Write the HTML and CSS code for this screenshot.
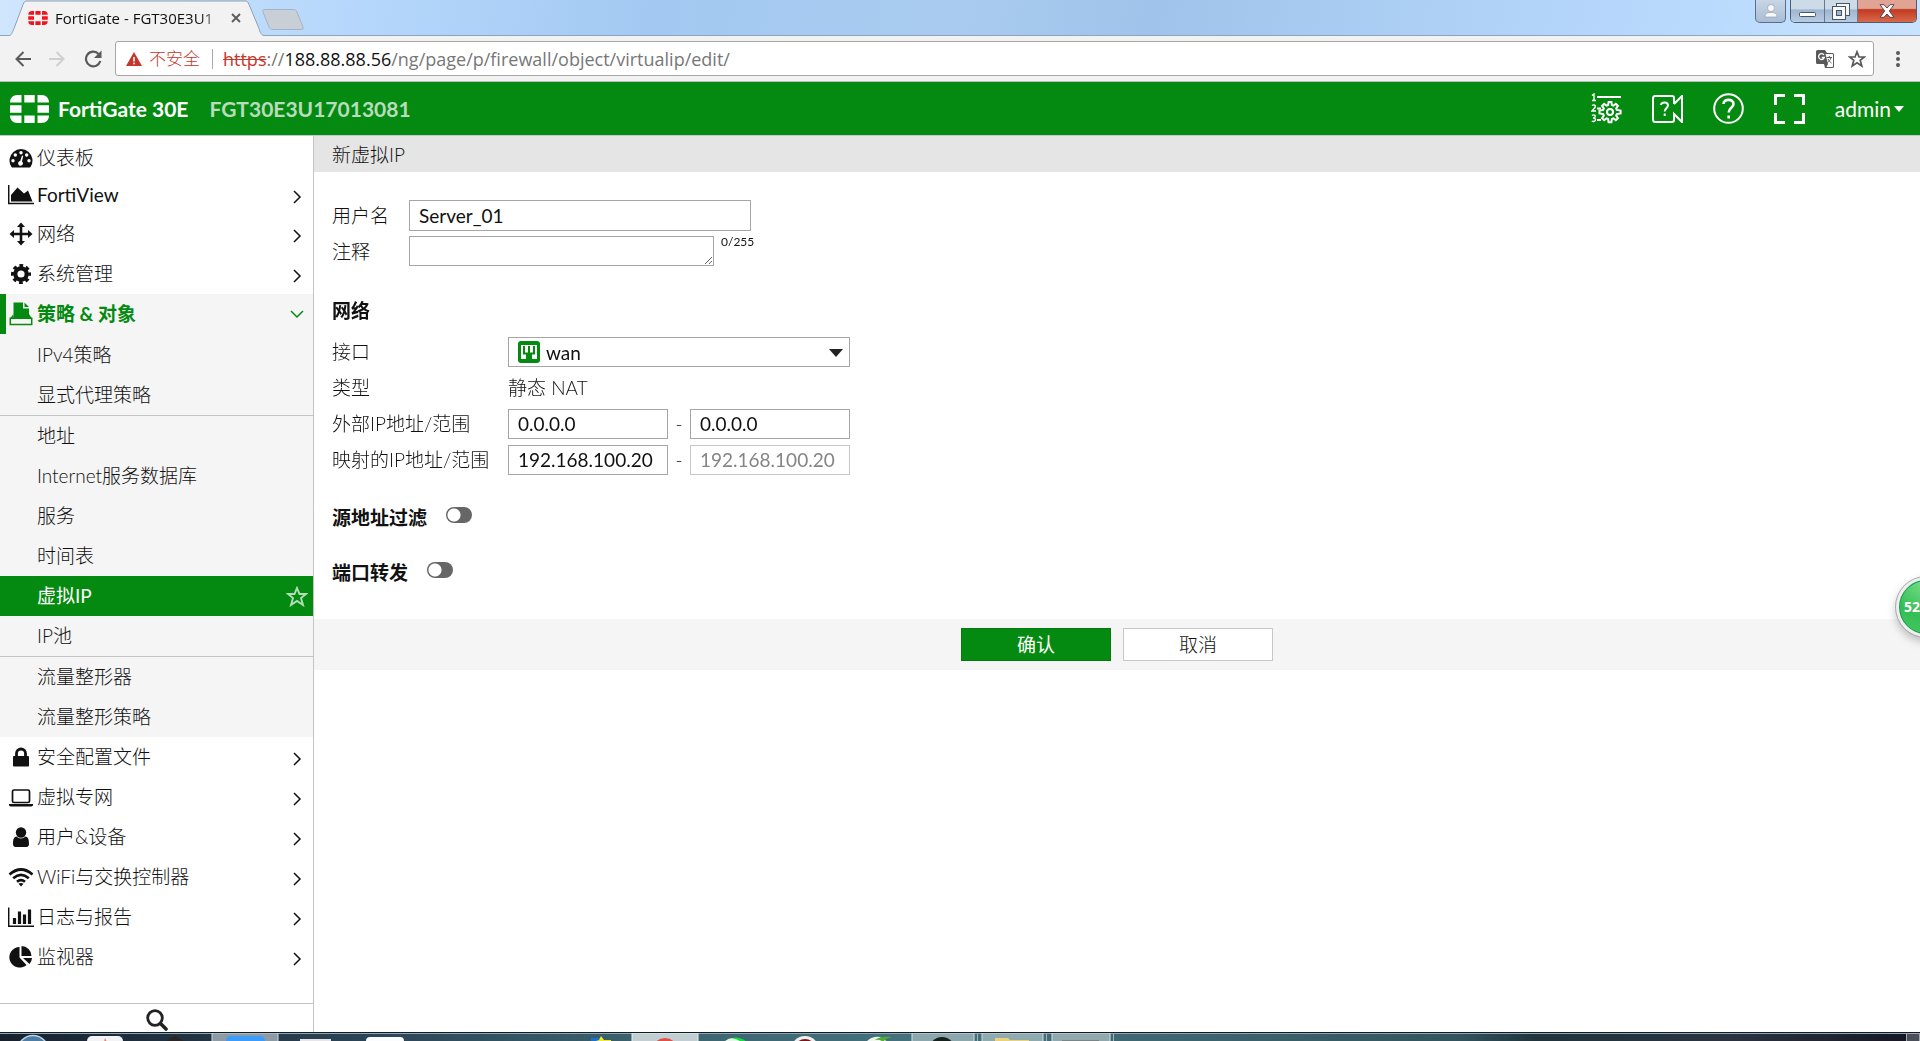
FILE: index.html
```html
<!DOCTYPE html>
<html lang="zh-CN">
<head>
<meta charset="utf-8">
<title>FortiGate - FGT30E3U17013081</title>
<link rel="stylesheet" href="styles.css">
</head>
<body>
<svg class="defs" aria-hidden="true">
  <symbol id="chevron" viewBox="0 0 12 14"><path d="M3 1 9 7 3 13" fill="none" stroke="currentColor" stroke-width="1.500"/></symbol>
  <symbol id="fortinet" viewBox="0 0 39 28">
    <path d="M0 7.500C0 3 3 0 7.500 0H11.500V7.500ZM14.300 0H24.700V7.500H14.300ZM27.500 0H31.500C36 0 39 3 39 7.500H27.500ZM0 10.300H11.500V17.700H0ZM27.500 10.300H39V17.700H27.500ZM0 20.500H11.500V28H7.500C3 28 0 25 0 20.500ZM14.300 20.500H24.700V28H14.300ZM27.500 20.500H39C39 25 36 28 31.500 28H27.500Z" fill="currentColor"/>
  </symbol>
</svg>

<header class="browser">
  <div class="tabstrip">
    <div class="tab">
      <svg class="tab-shape" width="258" height="35" viewBox="0 0 258 35"><path d="M0 35.500C4 35 4 32 6 28L15 4C16 1.500 17 .5 19 .5H237C239 .5 240 1.500 241 4L251 28C252 32 253 35 258 35.500" fill="#f2f2f2" stroke="#8f9fb8"/></svg>
      <svg class="favicon" width="20" height="14"><use href="#fortinet"/></svg>
      <span class="tab-title">FortiGate - FGT30E3U1</span>
      <button class="tab-close" aria-label="关闭标签页"><svg width="10" height="10" viewBox="0 0 10 10"><path d="M1 1 9 9M9 1 1 9" stroke="#5a5a5a" stroke-width="1.800"/></svg></button>
    </div>
    <button class="newtab" aria-label="新标签页"><svg width="42" height="21" viewBox="0 0 42 21"><path d="M2 .5H31C33 .5 34 1 35 3L41 18C41.500 20 41 20.500 39 20.500H11C9 20.500 8 20 7 18L1 3C.5 1.500 .5 .5 2 .5Z" fill="#c8cfd7" stroke="#a3b4ca"/></svg></button>
    <div class="winbtns">
      <button class="profile" aria-label="用户"><svg width="14" height="14" viewBox="0 0 14 14"><circle cx="7" cy="4" r="3.500" fill="#f8f8f8" stroke="#8c98a8" stroke-width=".6"/><path d="M1 13C1 9 4 8.500 7 8.500S13 9 13 13Z" fill="#f8f8f8" stroke="#8c98a8" stroke-width=".6"/></svg></button>
      <div class="wingroup">
        <button class="min" aria-label="最小化"><svg width="17" height="6" viewBox="0 0 17 6"><rect x=".5" y=".5" width="16" height="4" rx="1" fill="#fff" stroke="#4a5563"/></svg></button>
        <button class="max" aria-label="还原"><svg width="18" height="17" viewBox="0 0 18 17"><rect x="4.500" y=".5" width="13" height="12" fill="#f4f4f4" stroke="#4a5563"/><rect x=".5" y="3.500" width="13" height="13" fill="#f8f8f8" stroke="#4a5563"/><rect x="4.500" y="7.500" width="5" height="5" fill="#9db4cf" stroke="#4a5563"/></svg></button>
        <button class="close" aria-label="关闭"><svg width="16" height="14" viewBox="0 0 16 14"><path d="M1 .7H5L8 4 11 .7H15L10.300 7 15 13.300H11L8 10 5 13.300H1L5.700 7Z" fill="#fff" stroke="#5a4450"/></svg></button>
      </div>
    </div>
  </div>
  <div class="toolbar">
    <button aria-label="后退"><svg width="16" height="16" viewBox="0 0 16 16"><path d="M16 8H2M8.500 1 1.500 8 8.500 15" fill="none" stroke="#5a5a5a" stroke-width="2"/></svg></button>
    <button aria-label="前进"><svg width="16" height="16" viewBox="0 0 16 16"><path d="M0 8H14M7.500 1 14.500 8 7.500 15" fill="none" stroke="#d0d0d0" stroke-width="2"/></svg></button>
    <button aria-label="刷新"><svg width="18" height="18" viewBox="0 0 18 18"><path d="M14.800 4.200A7.300 7.300 0 1 0 16.300 11" fill="none" stroke="#5a5a5a" stroke-width="2.200"/><path d="M17.500 .5V8H10Z" fill="#5a5a5a"/></svg></button>
    <div class="omnibox">
      <svg width="16" height="14" viewBox="0 0 16 14"><path d="M8 0 16 14H0Z" fill="#c5372c"/><path d="M8 5V9.500M8 10.700V12.300" stroke="#fff" stroke-width="1.600"/></svg>
      <span class="insecure">不安全</span>
      <span class="url" role="textbox" aria-label="地址"><s>https</s>://<b>188.88.88.56</b>/ng/page/p/firewall/object/virtualip/edit/</span>
      <button aria-label="翻译"><svg width="18" height="18" viewBox="0 0 18 18"><path d="M1.500 0H9L11 3H16.500A1.500 1.500 0 0 1 18 4.500V16.500A1.500 1.500 0 0 1 16.500 18H9L8 14H1.500A1.500 1.500 0 0 1 0 12.500V1.500A1.500 1.500 0 0 1 1.500 0Z" fill="#5a5a5a"/><path d="M9.500 4H16.300Q17 4 17 4.700V16.300Q17 17 16.300 17H10.500L12 14Z" fill="#fff"/><path d="M8 5A2.900 2.900 0 1 0 8.300 7.500H5.800" fill="none" stroke="#fff" stroke-width="1.300"/><path d="M10.500 7.500H16M13.300 6V7.500M15 7.500C14.500 10 13 11.500 11.500 12.500M12 9C13 11 14 12 15.500 13" fill="none" stroke="#5a5a5a"/></svg></button>
      <button aria-label="收藏"><svg width="18" height="18" viewBox="0 0 18 18"><path d="M9 1.800 11 7H16.300L12.200 10.300 13.800 16 9 12.700 4.200 16 5.800 10.300 1.700 7H7Z" fill="none" stroke="#5a5a5a" stroke-width="1.700"/></svg></button>
    </div>
    <button class="menu" aria-label="菜单"><svg width="4" height="16" viewBox="0 0 4 16"><path d="M2 2V2.010M2 8V8.010M2 14V14.010" stroke="#5a5a5a" stroke-width="4" stroke-linecap="round"/></svg></button>
  </div>
</header>

<div class="appbar">
  <svg class="logo" width="39" height="28"><use href="#fortinet"/></svg>
  <span class="model">FortiGate 30E</span>
  <span class="serial">FGT30E3U17013081</span>
  <div class="tools">
    <button aria-label="设置"><svg width="31" height="31" viewBox="0 0 31 31" fill="none" stroke="#fff"><path d="M6 4H30M6 15.500H10M6 27H10" stroke-width="2"/><path d="M1 2.500 3 1V8M1 7.500H5M1 12.500C3 11 5 12.500 4 14.500L1 18H5M1 22.500C3 21 5 22.500 4 24 3.500 25 2 25 2 25 3.500 25 5 25.500 4.300 27.300 3.500 29 1.500 28.500 .8 28" stroke-width="1.400"/><path d="M17.100 12.100 17.600 9.100H20.400L20.900 12.100 22.300 12.700 24.800 10.900 26.900 12.900 25.200 15.400 25.800 16.900 29.600 17.500V20.500L25.800 21.100 25.200 22.600 26.900 25.100 24.800 27.100 22.300 25.300 20.900 25.900 20.400 29.300H17.600L17.100 25.900 15.700 25.300 13.200 27.100 11.100 25.100 12.800 22.600 12.200 21.100 8.500 20.500V17.500L12.200 16.900 12.800 15.400 11.100 12.900 13.200 10.900 15.700 12.700Z" stroke-width="2"/><circle cx="19" cy="19" r="3" stroke-width="2"/></svg></button>
    <button aria-label="视频帮助"><svg width="31" height="28" viewBox="0 0 31 28" fill="none" stroke="#fff" stroke-width="2"><path d="M22 9V3Q22 1 20 1H3Q1 1 1 4V24Q1 27 3 27H20Q22 27 22 25V19L30 27V1L22 9"/><path d="M9 10C9 6.500 16 6.500 16 10.500 16 13 12.700 13 12.700 16.500M12.700 18.500V21"/></svg></button>
    <button aria-label="帮助"><svg width="31" height="31" viewBox="0 0 31 31" fill="none" stroke="#fff"><circle cx="15.500" cy="15.500" r="14.300" stroke-width="2"/><path d="M10.500 11C10.500 5.500 20.500 5.500 20.500 11 20.500 15 15.700 14.500 15.700 19.500M15.700 22.500V25.500" stroke-width="2.600"/></svg></button>
    <button aria-label="全屏"><svg width="31" height="30" viewBox="0 0 31 30" fill="none" stroke="#fff" stroke-width="3"><path d="M1.500 11V1.500H11M20 1.500H29.500V11M29.500 19V28.500H20M11 28.500H1.500V19"/></svg></button>
    <button class="admin">admin<svg width="10" height="6" viewBox="0 0 10 6"><path d="M0 0H10L5 6Z" fill="#fff"/></svg></button>
  </div>
</div>

<div class="body">
  <nav class="sidebar">
    <a class="item first" href="#"><svg width="26" height="24" viewBox="0 0 26 24"><path fill-rule="evenodd" d="M3.500 21A11.500 11.500 0 1 1 22.500 21Q22 21.500 21.500 21.500H4.500Q4 21.500 3.500 21ZM13 5A1.700 1.700 0 1 0 13 8.400 1.700 1.700 0 1 0 13 5ZM7.300 7.300A1.700 1.700 0 1 0 7.300 10.700 1.700 1.700 0 1 0 7.300 7.300ZM18.700 7.300A1.700 1.700 0 1 0 18.700 10.700 1.700 1.700 0 1 0 18.700 7.300ZM5 13A1.700 1.700 0 1 0 5 16.400 1.700 1.700 0 1 0 5 13ZM21 13A1.700 1.700 0 1 0 21 16.400 1.700 1.700 0 1 0 21 13ZM14 9.500 12.200 15A2.400 2.400 0 1 0 14 15.500L15.200 10Z" fill="currentColor"/></svg><span>仪表板</span></a>
    <a class="item latin" href="#"><svg width="26" height="24" viewBox="0 0 26 24"><path d="M.7 2V20.500H26" fill="none" stroke="currentColor" stroke-width="1.500"/><path d="M3 18.500V12L9.500 4.500 16 10.500 20 7.500 24.500 18.500Z" fill="currentColor"/></svg><span>FortiView</span><svg class="arrow"><use href="#chevron"/></svg></a>
    <a class="item" href="#"><svg width="26" height="24" viewBox="0 0 26 24"><path d="M13 .5 17 5H14.300V10.700H20V8L24.500 12 20 16V13.300H14.300V19H17L13 23.500 9 19H11.700V13.300H6V16L1.500 12 6 8V10.700H11.700V5H9Z" fill="currentColor"/></svg><span>网络</span><svg class="arrow"><use href="#chevron"/></svg></a>
    <a class="item" href="#"><svg width="26" height="24" viewBox="0 0 26 24"><circle cx="13" cy="12" r="5.700" fill="none" stroke="currentColor" stroke-width="4.200"/><circle cx="13" cy="12" r="8.500" fill="none" stroke="currentColor" stroke-width="3" stroke-dasharray="3.700 2.976" stroke-dashoffset="1.850"/></svg><span>系统管理</span><svg class="arrow"><use href="#chevron"/></svg></a>
    <a class="item open" href="#"><svg width="26" height="24" viewBox="0 0 26 24"><path d="M5.500 .5H15V6.500H21V16H5.500ZM16.500 .5 21 5H16.500Z" fill="currentColor"/><path d="M2.300 16.300H23.700V22.500H2.300Z" fill="#f5f5f5" stroke="currentColor" stroke-width="1.500"/><path d="M5.500 12 2 16.500H5.500ZM21 12 24 16.500H21Z" fill="currentColor"/></svg><span>策略 &amp; 对象</span><svg class="arrow down"><use href="#chevron"/></svg></a>
    <div class="submenu">
      <div class="group"><a href="#">IPv4策略</a><a href="#">显式代理策略</a></div>
      <div class="group"><a href="#">地址</a><a href="#">Internet服务数据库</a><a href="#">服务</a><a href="#">时间表</a><a class="current" href="#"><span>虚拟IP</span><svg width="22" height="21" viewBox="0 0 22 21"><path d="M11 2 13.500 8H20L15 12 17 19 11 15 5 19 7 12 2 8H8.500Z" fill="none" stroke="#b5dcb9" stroke-width="1.900"/></svg></a><a href="#">IP池</a></div>
      <div class="group"><a href="#">流量整形器</a><a href="#">流量整形策略</a></div>
    </div>
    <a class="item" href="#"><svg width="26" height="24" viewBox="0 0 26 24"><path d="M8.500 12V8.500A4.500 4.500 0 0 1 17.500 8.500V12" fill="none" stroke="currentColor" stroke-width="2.800"/><rect x="5" y="11" width="16" height="10.500" rx="1" fill="currentColor"/></svg><span>安全配置文件</span><svg class="arrow"><use href="#chevron"/></svg></a>
    <a class="item" href="#"><svg width="26" height="24" viewBox="0 0 26 24"><rect x="4.500" y="5" width="17" height="12.500" rx="1.500" fill="none" stroke="currentColor" stroke-width="1.700"/><path d="M1 19H25V20.500Q24 21.500 23 21.500H3Q2 21.500 1 20.500Z" fill="currentColor"/></svg><span>虚拟专网</span><svg class="arrow"><use href="#chevron"/></svg></a>
    <a class="item" href="#"><svg width="26" height="24" viewBox="0 0 26 24"><circle cx="13" cy="7.500" r="5.200" fill="currentColor"/><path d="M5 19C5 14 6 12 8.500 11.500 11 14 15 14 17.500 11.500 20 12 21 14 21 19 21 21 20 22 18.500 22H7.500C6 22 5 21 5 19Z" fill="currentColor"/></svg><span>用户&amp;设备</span><svg class="arrow"><use href="#chevron"/></svg></a>
    <a class="item" href="#"><svg width="26" height="24" viewBox="0 0 26 24"><path d="M1.500 9.500Q13 -.5 24.500 9.500M5.200 13.200Q13 6.500 20.800 13.200M9 16.800Q13 13.300 17 16.800" fill="none" stroke="currentColor" stroke-width="2.700"/><path d="M10.500 18.800Q13 17 15.500 18.800L13 21.500Z" fill="currentColor"/></svg><span>WiFi与交换控制器</span><svg class="arrow"><use href="#chevron"/></svg></a>
    <a class="item" href="#"><svg width="26" height="24" viewBox="0 0 26 24"><path d="M.7 2.500V21.300H26" fill="none" stroke="currentColor" stroke-width="1.500"/><path d="M6.500 19V13M11.500 19V6.500M16.500 19V9.500M21.500 19V4.500" stroke="currentColor" stroke-width="3.200"/></svg><span>日志与报告</span><svg class="arrow"><use href="#chevron"/></svg></a>
    <a class="item" href="#"><svg width="26" height="24" viewBox="0 0 26 24"><path d="M11.500 2V12.500L18.500 20A10.300 10.300 0 1 1 11.500 2ZM13.500 1A10 10 0 0 1 23.500 11H13.500ZM15 13H24A9.500 9.500 0 0 1 21.500 19Z" fill="currentColor"/></svg><span>监视器</span><svg class="arrow"><use href="#chevron"/></svg></a>
    <button class="search" aria-label="搜索"><svg width="22" height="22" viewBox="0 0 22 22"><circle cx="9" cy="9" r="7.300" fill="none" stroke="#222" stroke-width="2.800"/><path d="M14.500 14.500 20 20" stroke="#222" stroke-width="3.600" stroke-linecap="round"/></svg></button>
  </nav>

  <main class="content">
    <h1>新虚拟IP</h1>
    <form class="form">
      <section class="basic">
        <label for="name">用户名</label>
        <input id="name" type="text" value="Server_01">
        <label for="comments">注释</label>
        <div class="comment"><textarea id="comments"></textarea><small>0/255</small></div>
      </section>
      <section class="network">
        <h2>网络</h2>
        <label for="iface">接口</label>
        <div class="select">
          <select id="iface"><option>wan</option></select>
          <svg class="port" width="22" height="22" viewBox="0 0 22 22"><rect width="22" height="22" rx="3" fill="#048a10"/><path d="M3 4H19V18H14V15H8V18H3Z" fill="#fff"/><path d="M6 5V12.500H16V5M11 5V15" fill="none" stroke="#048a10" stroke-width="2"/><path d="M8 12H14V17H8Z" fill="#048a10"/></svg>
          <svg class="caret" width="14" height="8" viewBox="0 0 14 8"><path d="M0 0H14L7 8Z" fill="#222"/></svg>
        </div>
        <span>类型</span>
        <span>静态 NAT</span>
        <label for="ext-from">外部IP地址/范围</label>
        <div class="range"><input id="ext-from" type="text" value="0.0.0.0"><span>-</span><input type="text" aria-label="外部IP结束" value="0.0.0.0"></div>
        <label for="map-from">映射的IP地址/范围</label>
        <div class="range"><input id="map-from" type="text" value="192.168.100.20"><span>-</span><input type="text" aria-label="映射IP结束" value="192.168.100.20" disabled></div>
      </section>
      <div class="switch"><label for="src">源地址过滤</label><input id="src" type="checkbox"></div>
      <div class="switch"><label for="fwd">端口转发</label><input id="fwd" type="checkbox"></div>
      <footer class="actions">
        <button class="primary" type="button">确认</button>
        <button type="button">取消</button>
      </footer>
    </form>
    <div class="bubble">52</div>
  </main>
</div>

<div class="taskbar">
  <svg width="1120" height="8" viewBox="0 0 1120 8">
    <circle cx="33" cy="18" r="15.500" fill="#4d7da3" stroke="#b9d3e4" stroke-width="1.500"/>
    <rect x="87" y="3" width="36" height="20" rx="5" fill="#f1f3f4"/><path d="M104 9 105 5 107 9Z" fill="#e8805d"/>
    <path d="M164 9 175 3 186 9Z" fill="#2b2626"/>
    <rect x="212" y="0" width="66" height="12" fill="#8d9ba6" stroke="#cdd8df"/><rect x="226" y="3" width="39" height="20" rx="5" fill="#3d9bfa"/>
    <rect x="300" y="6" width="31" height="9" fill="#e9e4e8"/>
    <rect x="366" y="4" width="38" height="20" rx="4" fill="#fafcfd"/>
    <path d="M591 5H600V9H591Z" fill="#1d70c9"/><path d="M601 3 604 7H611V9H593L599 7Z" fill="#f4e82b"/>
    <rect x="632" y="0" width="66" height="12" fill="#c1cfd2" stroke="#e5edef"/><circle cx="665" cy="18" r="13" fill="#e25045"/>
    <circle cx="733" cy="17" r="12" fill="#e8f5e9"/><path d="M731 5Q740 3 747 9H741Q738 6 731 5Z" fill="#14e03d"/>
    <circle cx="805" cy="17" r="14" fill="#f0f0f0"/><circle cx="805" cy="17" r="11" fill="#7d1318"/>
    <path d="M866 9Q872 3 880 4L888 9Z" fill="#eef5ea"/><path d="M875 7Q880 3 892 4 885 6 883 9 880 6 875 7Z" fill="#4fae32"/>
    <rect x="912" y="0" width="62" height="12" fill="#8ca8ad" stroke="#d3e0e2"/><circle cx="942" cy="17" r="13" fill="#17201d"/>
    <rect x="982" y="0" width="61" height="12" fill="#8fabb0" stroke="#d3e0e2"/><path d="M995 5H1008L1010 7H1029V9H995Z" fill="#ebd27a"/>
    <rect x="1052" y="0" width="58" height="12" fill="#8fa9ae" stroke="#d3e0e2"/><rect x="1062" y="7" width="37" height="2" fill="#7b8487"/>
    <path d="M977.500 1V9M1046.500 1V9M1113.500 1V9" stroke="#9db7bc"/>
  </svg>
  <button class="desktop" aria-label="显示桌面"></button>
</div>
</body>
</html>
```
FILE: styles.css
```css
* { box-sizing: border-box; }

body {
  margin: 0;
  min-height: 100vh;
  display: flex;
  flex-direction: column;
  background: #fff;
  color: #222;
  font: 19px/30px Lato, "Noto Sans CJK SC", sans-serif;
  overflow-x: hidden;
}

button, input, select, textarea { font: inherit; color: inherit; }
button { display: flex; align-items: center; justify-content: center; padding: 0; border: 0; background: none; }
a { color: inherit; text-decoration: none; }
svg { display: block; flex: none; }
.defs { position: absolute; width: 0; height: 0; }

/* Browser window */
.browser { font-family: "Open Sans", "Noto Sans CJK SC", sans-serif; }
.tabstrip {
  display: flex;
  height: 36px;
  padding-left: 8px;
  border-bottom: 1px solid #8fa3bf;
  background: linear-gradient(100deg, #cfe6fd 0, #b4d6fb 20%, #a3c9f2 34%, #a9cbef 50%, #9fc3ea 60%, #afd1f6 76%, #b9dafd 88%, #c9e3ff 100%);
}
.tab { position: relative; display: flex; align-items: center; width: 258px; height: 36px; padding: 0 17px 0 20px; }
.tab-shape { position: absolute; left: 0; top: 0; height: 36px; }
.favicon { position: relative; color: #f0141e; }
.tab-title {
  position: relative;
  width: 165px;
  margin-left: 7px;
  white-space: nowrap;
  font-size: 15px;
  color: #111;
  -webkit-mask-image: linear-gradient(90deg, #000 88%, #0004);
  mask-image: linear-gradient(90deg, #000 88%, #0004);
}
.tab-close { position: relative; margin-left: 11px; }
.newtab { height: 21px; margin: 9px 0 0 -4px; }
.winbtns { display: flex; gap: 4px; margin: 0 3px 0 auto; }
.profile {
  width: 31px;
  height: 23px;
  border: 1px solid #5d6f86;
  border-top: 0;
  border-radius: 0 0 5px 5px;
  background: linear-gradient(#c8d6e5, #a9bdd4);
}
.wingroup {
  display: flex;
  height: 23px;
  border: 1px solid #4f5d70;
  border-top: 0;
  border-radius: 0 0 5px 5px;
  overflow: hidden;
}
.min, .max { border-right: 1px solid #66788f; background: linear-gradient(#cddae8 40%, #9fb5cf 45%, #b8cde4); }
.min { width: 34px; padding-top: 8px; }
.max { width: 33px; }
.close { width: 58px; background: linear-gradient(#e0a394 38%, #c23a22 44%, #d8694a); }

.toolbar { display: flex; align-items: center; height: 46px; padding: 0 20px 0 15px; border-bottom: 1px solid #bdbdbd; background: #f2f2f2; }
.toolbar > button { margin-right: 18px; }
.toolbar > button:nth-child(3) { margin: 0 13px 0 1px; }
.toolbar > .menu { margin: 0 0 0 22px; }
.omnibox { display: flex; align-items: center; flex: 1; height: 35px; padding: 0 7px 0 10px; border: 1px solid #a6a6a6; border-radius: 3px; background: #fff; }
.insecure { margin-left: 7px; padding-right: 12px; border-right: 1px solid #aaa; font-size: 17px; line-height: 20px; font-weight: 300; color: #c5372c; }
.url { flex: 1; margin-left: 10px; font-size: 18px; color: #777; }
.url s { color: #c5372c; }
.url b { font-weight: 400; color: #111; }
.omnibox button { margin-left: 14px; }

/* Application header */
.appbar { display: flex; align-items: center; height: 54px; padding: 0 16px 0 10px; border-bottom: 1px solid #c8c8c8; background: #048a10; color: #fff; font-size: 21px; }
.model { margin-left: 9px; font-weight: 700; }
.serial { margin-left: 21px; font-weight: 700; color: #b9dcbc; }
.tools { display: flex; align-items: center; gap: 30px; margin-left: auto; }
.admin { gap: 3px; }

/* Navigation */
.body { display: flex; flex: 1; }
.sidebar { display: flex; flex-direction: column; flex: none; width: 314px; border-right: 1px solid #c4c4c4; }
.item, .submenu a, .content { font-weight: 300; color: #111; }
.item { display: flex; align-items: center; height: 40px; padding: 0 10px 0 8px; }
.item.first { padding-top: 3px; }
.item.latin { height: 38px; font-weight: 400; }
.item span { flex: 1; margin-left: 3px; }
.item .arrow { width: 12px; height: 14px; margin-top: 3px; }
.item .down { margin-top: 0; transform: rotate(90deg); }
.item.open { border-left: 6px solid #048a10; padding-left: 2px; background: #f5f5f5; color: #048a10; font-weight: 700; }
.submenu { padding-top: 1px; background: #f5f5f5; }
.group + .group { border-top: 1px solid #c4c4c4; }
.submenu a { display: flex; align-items: center; justify-content: space-between; height: 40px; padding: 0 6px 0 37px; }
.submenu .current { padding-right: 5px; background: #048a10; color: #fff; font-weight: 400; }
.search { height: 29px; margin-top: auto; border-top: 1px solid #c4c4c4; padding-top: 3px; }

/* Form */
.content { position: relative; flex: 1; overflow: hidden; }
h1 { margin: 0; height: 36px; padding-left: 18px; background: #e5e5e5; font-size: 19px; line-height: 37px; font-weight: 300; }
h2 { grid-column: 1 / -1; margin: 0 0 5px; font-size: 19px; line-height: 30px; font-weight: 700; }
.basic, .network { display: grid; padding-left: 18px; }
.basic { grid-template-columns: 77px 342px; row-gap: 5px; margin-top: 28px; }
.network { grid-template-columns: 176px 342px; row-gap: 6px; margin: 29px 0 28px; }
.basic label { padding-top: 1px; line-height: 30px; }
.form input[type="text"], select, textarea {
  height: 30px;
  width: 100%;
  padding: 0 9px;
  border: 1px solid #a6a6a6;
  border-radius: 0;
  background: #fff;
  font-weight: 400;
}
.form input:disabled { border-color: #c8c8c8; color: #858585; }
.form input#name { height: 31px; }
.comment { display: flex; gap: 7px; }
.comment textarea { display: block; flex: none; width: 305px; min-height: 30px; }
small { font-size: 12px; line-height: 12px; font-weight: 400; white-space: nowrap; }
.select { position: relative; }
select { display: block; appearance: none; padding-left: 37px; }
.port { position: absolute; left: 10px; top: 4px; }
.caret { position: absolute; right: 7px; top: 12px; }
.range { display: grid; grid-template-columns: 160px 22px 160px; text-align: center; }
.switch { display: flex; gap: 19px; margin: 0 0 25px 18px; font-weight: 700; }
.switch input {
  appearance: none;
  width: 26px;
  height: 16px;
  margin: 4px 0 0;
  border-radius: 8px;
  background: radial-gradient(circle at 8px 8px, #fff 6px, #666 7px);
}
.actions { display: flex; justify-content: center; gap: 12px; margin-top: 31px; padding: 9px 0; background: #f5f5f5; }
.actions button { width: 150px; height: 33px; border: 1px solid #c8c8c8; background: #fff; font-weight: 300; }
.actions .primary { border-color: #037a0d; background: #048a10; color: #fff; font-weight: 400; }

/* Floating monitor bubble, partly past the window edge */
.bubble {
  position: absolute;
  right: -36px;
  top: 441px;
  width: 60px;
  height: 60px;
  padding-left: 5px;
  border: 3px solid #eee;
  border-radius: 50%;
  outline: 1px solid #aaa;
  background: radial-gradient(circle at 50% 0, #7be38c, #35bd55 60%, #48cb62);
  box-shadow: inset 0 0 0 1px #17985a, 0 4px 10px #0004;
  color: #fff;
  font: 700 14px/54px "Open Sans", sans-serif;
}

.taskbar {
  display: flex;
  justify-content: space-between;
  flex: none;
  height: 9px;
  overflow: hidden;
  border-top: 1px solid #111a22;
  box-shadow: inset 0 1px #8fa6b4;
  background: linear-gradient(90deg, #17212e, #2c4657 20%, #3b636e 34%, #45727d 48%, #3b626c 65%, #33545f 76%, #20343c 80%, #2a3440 90%, #141622);
}
.desktop { width: 14px; height: 10px; border: 1px solid #a3a9b3; background: #4b5058; }
```
